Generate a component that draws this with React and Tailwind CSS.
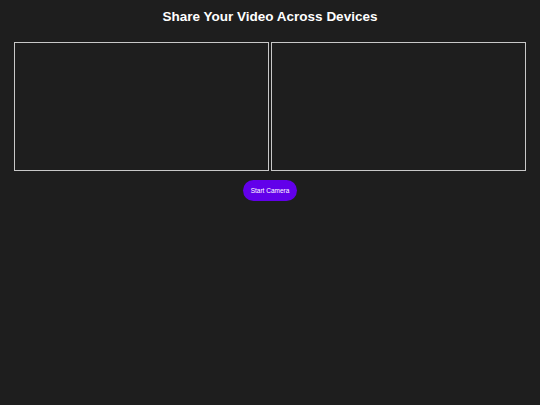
export default function App() {
  return (
    <div className="min-h-[405px] bg-[#1e1e1e] text-white font-['Liberation_Sans',Arial,sans-serif] flex flex-col items-center">
      <h1 className="mt-[9px] text-[13.5px] font-bold leading-[16px]">Share Your Video Across Devices</h1>

      <div className="mt-[17px] flex gap-[2px] w-full px-[14px]">
        <div className="flex-1 h-[129px] border border-[#c8c8c8] bg-[#1e1e1e]" />
        <div className="flex-1 h-[129px] border border-[#c8c8c8] bg-[#1e1e1e]" />
      </div>

      <button className="mt-[9px] h-[21px] px-[8px] rounded-full bg-[#6200ea] text-[6.5px] text-white">
        Start Camera
      </button>
    </div>
  );
}
